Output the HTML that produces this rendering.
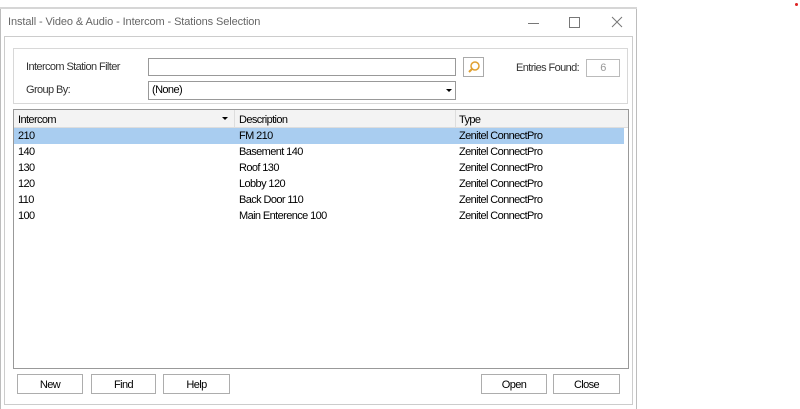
<!DOCTYPE html>
<html><head><style>
body{margin:0;width:800px;height:409px;background:#fff;position:relative;overflow:hidden;font-family:"Liberation Sans",sans-serif;font-size:11px;color:#000;letter-spacing:-0.6px}
.a{position:absolute}
.btn{position:absolute;top:374px;height:20px;border:1px solid #adadad;background:#fff;text-align:center;line-height:20px;font-size:11px;box-sizing:border-box}
.row{position:absolute;left:14px;width:610px;height:16px;line-height:16px}
.row span{position:absolute}
</style></head><body>
<div class="a" style="left:0;top:7px;width:637px;height:2px;background:#d6d6d6"></div>
<div class="a" style="left:0;top:9px;width:1px;height:400px;background:#bdbdbd"></div>
<div class="a" style="left:636px;top:9px;width:1px;height:400px;background:#bdbdbd"></div>
<div class="a" style="left:8px;top:16px;color:#666;font-size:11px;letter-spacing:-0.1px">Install - Video &amp; Audio - Intercom - Stations Selection</div>
<div class="a" style="left:528px;top:23px;width:11px;height:1px;background:#777"></div>
<div class="a" style="left:569px;top:17px;width:9px;height:9px;border:1px solid #777"></div>
<svg class="a" style="left:611px;top:16px" width="12" height="12"><path d="M1 1L11 11M11 1L1 11" stroke="#777" stroke-width="1"/></svg>
<div class="a" style="left:795px;top:3px;width:3px;height:3px;background:#d22;border-radius:2px"></div>
<div class="a" style="left:4px;top:36px;width:629px;height:369px;border:1px solid #ccc;box-sizing:border-box"></div>
<div class="a" style="left:13px;top:48px;width:615px;height:56px;border:1px solid #d8d8d8;box-sizing:border-box"></div>
<div class="a" style="left:26px;top:61px;color:#333">Intercom Station Filter</div>
<div class="a" style="left:26px;top:84px;color:#333">Group By:</div>
<div class="a" style="left:148px;top:58px;width:308px;height:18px;border:1px solid #999;box-sizing:border-box"></div>
<div class="a" style="left:463px;top:57px;width:21px;height:20px;border:1px solid #aaa;box-sizing:border-box"></div>
<svg class="a" style="left:467px;top:60px" width="14" height="14"><circle cx="8" cy="6" r="4" fill="none" stroke="#e0a030" stroke-width="1.5"/><path d="M5 9L2 12" stroke="#e0a030" stroke-width="2"/></svg>
<div class="a" style="left:516px;top:62px;color:#333">Entries Found:</div>
<div class="a" style="left:586px;top:59px;width:34px;height:18px;border:1px solid #bbb;box-sizing:border-box;color:#999;text-align:center;line-height:16px">6</div>
<div class="a" style="left:148px;top:81px;width:308px;height:19px;border:1px solid #999;box-sizing:border-box;padding-left:3px;line-height:17px">(None)</div>
<div class="a" style="left:446px;top:89px;width:0;height:0;border-left:3px solid transparent;border-right:3px solid transparent;border-top:3px solid #000"></div>
<div class="a" style="left:13px;top:109px;width:616px;height:260px;border:1px solid #999;box-sizing:border-box"></div>
<div class="a" style="left:14px;top:110px;width:614px;height:17px;background:#f3f3f3;border-bottom:1px solid #ddd"></div>
<div class="a" style="left:234px;top:110px;width:1px;height:17px;background:#ddd"></div>
<div class="a" style="left:455px;top:110px;width:1px;height:17px;background:#ddd"></div>
<div class="a" style="left:18px;top:114px">Intercom</div>
<div class="a" style="left:222px;top:117px;width:0;height:0;border-left:3px solid transparent;border-right:3px solid transparent;border-top:3px solid #000"></div>
<div class="a" style="left:239px;top:114px">Description</div>
<div class="a" style="left:459px;top:114px">Type</div>
<div class="row" style="top:128px;background:#a9cdf0"><span style="left:4px">210</span><span style="left:225px">FM 210</span><span style="left:445px">Zenitel ConnectPro</span></div>
<div class="row" style="top:144px"><span style="left:4px">140</span><span style="left:225px">Basement 140</span><span style="left:445px">Zenitel ConnectPro</span></div>
<div class="row" style="top:160px"><span style="left:4px">130</span><span style="left:225px">Roof 130</span><span style="left:445px">Zenitel ConnectPro</span></div>
<div class="row" style="top:176px"><span style="left:4px">120</span><span style="left:225px">Lobby 120</span><span style="left:445px">Zenitel ConnectPro</span></div>
<div class="row" style="top:192px"><span style="left:4px">110</span><span style="left:225px">Back Door 110</span><span style="left:445px">Zenitel ConnectPro</span></div>
<div class="row" style="top:208px"><span style="left:4px">100</span><span style="left:225px">Main Enterence 100</span><span style="left:445px">Zenitel ConnectPro</span></div>
<div class="btn" style="left:17px;width:66px">New</div>
<div class="btn" style="left:91px;width:65px">Find</div>
<div class="btn" style="left:163px;width:67px">Help</div>
<div class="btn" style="left:481px;width:66px">Open</div>
<div class="btn" style="left:553px;width:67px">Close</div>
</body></html>
